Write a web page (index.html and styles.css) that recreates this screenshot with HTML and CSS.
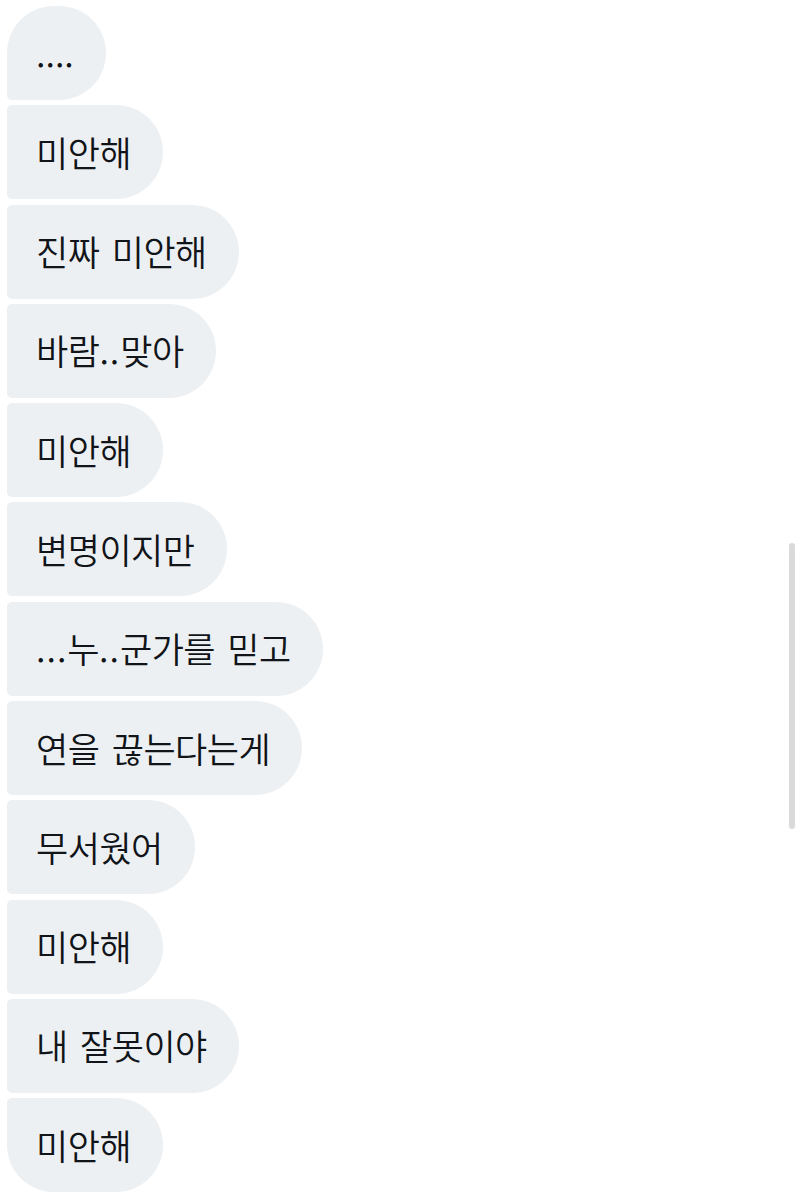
FILE: index.html
```html
<!DOCTYPE html>
<html lang="ko">
<head>
    <meta charset="UTF-8">
    <meta name="viewport" content="width=device-width, initial-scale=1.0">
    <title>메시지</title>
    <link rel="stylesheet" href="styles.css">
</head>
<body>
    <div class="chat">
        <div class="bubble"><span class="dots">....</span></div>
        <div class="bubble">미안해</div>
        <div class="bubble">진짜 미안해</div>
        <div class="bubble">바람<span class="dots wide">..</span>맞아</div>
        <div class="bubble">미안해</div>
        <div class="bubble">변명이지만</div>
        <div class="bubble"><span class="dots wide">...</span>누<span class="dots wide">..</span>군가를 믿고</div>
        <div class="bubble">연을 끊는다는게</div>
        <div class="bubble">무서웠어</div>
        <div class="bubble">미안해</div>
        <div class="bubble">내 잘못이야</div>
        <div class="bubble">미안해</div>
    </div>
    <div class="scrollbar"></div>
</body>
</html>
```

FILE: styles.css
```css
body {
    margin: 0;
    padding: 0;
    background-color: #fff;
    font-family: "Noto Sans CJK KR", "Noto Sans", sans-serif;
    color: #111418;
    overflow: hidden;
}
.chat {
    display: flex;
    flex-direction: column;
    align-items: flex-start;
    gap: 5.3px;
    padding: 6px 0 0 7px;
}
.bubble {
    display: flex;
    align-items: center;
    height: 94px;
    padding: 0 32px 2px 29px;
    box-sizing: border-box;
    background-color: #edf0f3;
    border-radius: 5px 47px 47px 5px;
    font-size: 35px;
    font-weight: 350;
    letter-spacing: -0.5px;
    word-spacing: 3px;
    white-space: pre;
}
.bubble:first-child {
    border-top-left-radius: 47px;
}
.bubble:last-child {
    border-bottom-left-radius: 47px;
}
.dots {
    letter-spacing: 0;
}
.dots.wide {
    letter-spacing: 1px;
}
.scrollbar {
    position: absolute;
    top: 543px;
    left: 789px;
    width: 6px;
    height: 286px;
    border-radius: 3px;
    background-color: #dadada;
}
```
